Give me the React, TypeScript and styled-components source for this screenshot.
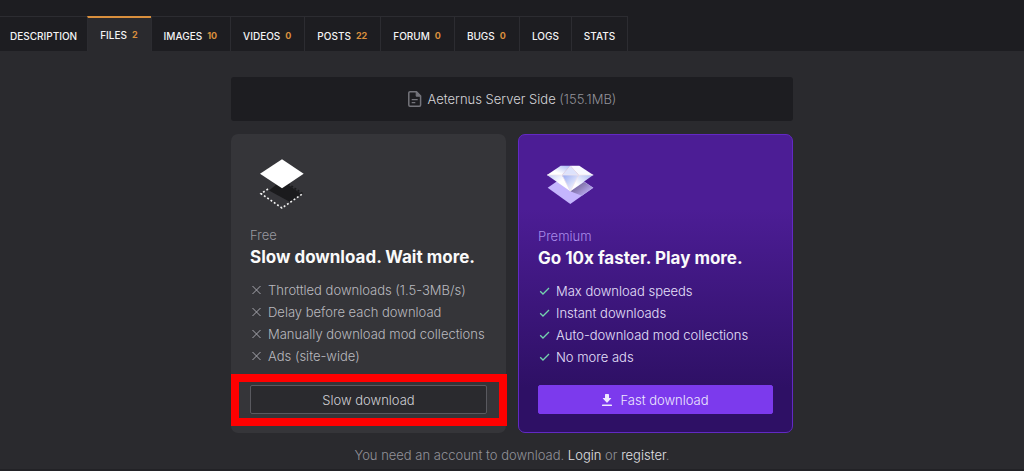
import React from "react";
import styled, { createGlobalStyle } from "styled-components";

const GlobalStyle = createGlobalStyle`
  *, *::before, *::after { box-sizing: border-box; }
  body {
    margin: 0;
    background: #222226;
    color: #d4d4d8;
    font-family: Inter, "Liberation Sans", sans-serif;
    font-size: 13px;
    font-weight: 300;
    line-height: 20px;
  }
`;

const Header = styled.header`
  padding-top: 16px;
  background: #1d1d21;
`;

const TabBar = styled.nav`
  display: flex;
  width: fit-content;
  height: 35px;
  border-right: 1px solid #2c2c31;
`;

const Tab = styled.a<{ $active?: boolean }>`
  display: flex;
  align-items: center;
  gap: 5px;
  padding: ${(p) => (p.$active ? "1px 12px 0" : "3px 12px 0")};
  border-top: ${(p) => (p.$active ? "2px solid #d98f3d" : "1px solid #2c2c31")};
  border-left: 1px solid #2c2c31;
  background: ${(p) => (p.$active ? "#2a2a2e" : "transparent")};
  color: #f4f4f5;
  font-size: 10px;
  font-weight: 500;
  text-decoration: none;
  text-transform: uppercase;

  &:first-child {
    padding-left: 10px;
    padding-right: 10px;
    border-left: 0;
  }
`;

const Count = styled.span`
  padding-right: 1px;
  color: #d98f3d;
  font-size: 9px;
  font-weight: 700;
`;

const Main = styled.main`
  padding: 26px 16px 4px;
  background: #2a2a2e;
`;

const Column = styled.div`
  display: flex;
  flex-direction: column;
  gap: 12px;
  max-width: 562px;
  margin: 0 auto;
`;

const FileBar = styled.div`
  display: flex;
  align-items: center;
  justify-content: center;
  gap: 6px;
  padding: 12px;
  margin-bottom: 1px;
  border-radius: 3px;
  background: #1d1d21;
`;

const FileSize = styled.span`
  color: #929299;
`;

const Plans = styled.div`
  display: grid;
  grid-template-columns: repeat(2, 1fr);
  gap: 12px;
`;

const Plan = styled.section<{ $premium?: boolean }>`
  display: flex;
  flex-direction: column;
  padding: ${(p) => (p.$premium ? "19px 19px 18px" : "19px")};
  border: ${(p) => (p.$premium ? "1px solid #6229c4" : "0")};
  border-radius: 7px;
  background: ${(p) =>
    p.$premium ? "linear-gradient(#4c1d95 25%, #2e1065 85%)" : "#353539"};
  color: ${(p) => (p.$premium ? "#e6e0fb" : "#b9b9bf")};
`;

const PlanArt = styled.svg`
  width: 64px;
  height: 64px;
  margin-bottom: 8px;
`;

const PlanName = styled.div<{ $premium?: boolean }>`
  color: ${(p) => (p.$premium ? "#a98bea" : "#98989f")};
`;

const PlanTitle = styled.h2`
  margin: 0 0 10px;
  color: #fafafa;
  font-size: 17px;
  font-weight: 700;
  line-height: 24px;
`;

const Features = styled.ul`
  margin: 0 0 17px;
  padding: 0;
  list-style: none;
`;

const Feature = styled.li`
  display: flex;
  align-items: center;
  gap: 6px;
  line-height: 22px;
`;

const Mark = styled.svg<{ $color: string }>`
  flex: none;
  width: 12px;
  height: 12px;
  fill: none;
  stroke: ${(p) => p.$color};
`;

const Action = styled.div`
  position: relative;
  margin-top: auto;
`;

const Highlight = styled.div`
  position: absolute;
  inset: -11px -20px -12px -19px;
  border: 8px solid #ff0000;
  pointer-events: none;
`;

const Button = styled.button<{ $premium?: boolean }>`
  display: flex;
  align-items: center;
  justify-content: center;
  gap: 8px;
  width: 100%;
  height: 29px;
  padding: 0;
  border: 1px solid ${(p) => (p.$premium ? "#7c3aed" : "#59595f")};
  border-radius: 2px;
  background: ${(p) => (p.$premium ? "#7c3aed" : "#2a2a2e")};
  color: ${(p) => (p.$premium ? "#ede9fe" : "#d0d0d5")};
  font: inherit;
`;

const Notice = styled.p`
  margin: 0;
  color: #929299;
  text-align: center;
`;

const NoticeLink = styled.a`
  color: #e0e0e4;
  text-decoration: none;
`;

const tabs: { label: string; count?: number; active?: boolean }[] = [
  { label: "Description" },
  { label: "Files", count: 2, active: true },
  { label: "Images", count: 10 },
  { label: "Videos", count: 0 },
  { label: "Posts", count: 22 },
  { label: "Forum", count: 0 },
  { label: "Bugs", count: 0 },
  { label: "Logs" },
  { label: "Stats" },
];

const freeFeatures = [
  "Throttled downloads (1.5-3MB/s)",
  "Delay before each download",
  "Manually download mod collections",
  "Ads (site-wide)",
];

const premiumFeatures = [
  "Max download speeds",
  "Instant downloads",
  "Auto-download mod collections",
  "No more ads",
];

const FileIcon = () => (
  <svg width="14" height="16" viewBox="0 0 14 16" fill="none" stroke="#74747b" aria-hidden="true">
    <path d="M8.5 .8H2A1.2 1.2 0 0 0 .8 2v12A1.2 1.2 0 0 0 2 15.200h9.400a1.200 1.200 0 0 0 1.200-1.200V5z" strokeWidth="1.500" strokeLinejoin="round" />
    <path d="M8.200 .8V5.200h4.400z" fill="#74747b" />
    <path d="M3.700 8.600h6M3.700 11.600h3.600" strokeWidth="1.200" />
  </svg>
);

const DownloadIcon = () => (
  <svg width="10" height="12" viewBox="0 0 10 12" fill="currentColor" aria-hidden="true">
    <path d="M3.700 0h2.600q.7 0 .7.7V4h1.800q.8 0 .3.600L5.400 8.500q-.4.400-.8 0L.9 4.600Q.4 4 1.200 4H3V.7Q3 0 3.700 0z" />
    <rect y="10.600" width="10" height="1.400" rx=".6" />
  </svg>
);

const FreeArt = () => (
  <PlanArt viewBox="0 0 64 64" aria-hidden="true">
    <path d="M32 26.500 52.700 40.700" fill="none" stroke="#1b1b1d" strokeWidth="1.600" strokeDasharray="2 1.800" />
    <path d="M19 37.500 27 31h10L51.500 41 40 49z" fill="#1b1b1d" />
    <path d="M18 36 11 40.700 32 55l20.700-14.300" fill="none" stroke="#f0f0f0" strokeWidth="1.600" strokeDasharray="1.900 2.100" />
    <path d="M32 6.300 53.700 20.800 32 35.300 10 20.800z" fill="#fff" />
  </PlanArt>
);

const PremiumArt = () => (
  <PlanArt viewBox="0 0 64 64" aria-hidden="true">
    <defs>
      <linearGradient id="slabShade" gradientUnits="userSpaceOnUse" x1="34" y1="32" x2="45" y2="46">
        <stop offset="0" stopColor="#6d6090" />
        <stop offset="1" stopColor="#c4b5fd" />
      </linearGradient>
      <linearGradient id="facetLeft" x1="0" y1="0" x2="1" y2="1">
        <stop offset="0" stopColor="#c3cdf8" />
        <stop offset=".5" stopColor="#fff" />
      </linearGradient>
      <linearGradient id="facetRight" x1="0" y1="1" x2="1" y2="0">
        <stop offset=".35" stopColor="#fff" />
        <stop offset="1" stopColor="#a9b8f4" />
      </linearGradient>
      <linearGradient id="facetMiddle" x1="0" y1="0" x2="1" y2="1">
        <stop offset=".1" stopColor="#a3b3f3" />
        <stop offset=".8" stopColor="#f4f5ff" />
      </linearGradient>
    </defs>
    <path d="M32.300 18 55.300 33.700 32.300 50 9.700 33.700z" fill="#c4b5fd" />
    <path d="M32.300 37.300 46 28 55.300 33.700 43.800 41.800z" fill="url(#slabShade)" />
    <path d="M22.700 11.700 9 21h15l8.300-9.300z" fill="url(#facetRight)" />
    <path d="M32.300 11.700 24 21h16.700z" fill="#dde2fc" />
    <path d="M32.300 11.700h9L55.300 21H40.700z" fill="#f7f8ff" />
    <path d="M9 21h15l8.300 16.300z" fill="url(#facetLeft)" />
    <path d="M24 21h16.700l-8.400 16.300z" fill="url(#facetMiddle)" />
    <path d="M40.700 21h14.600l-23 16.300z" fill="url(#facetRight)" />
    <path d="M9 21h46.300M32.300 12 24 21l8.300 16.300L40.700 21z" fill="none" stroke="#f3e6ea" strokeWidth=".7" />
  </PlanArt>
);

export default function App() {
  return (
    <>
      <GlobalStyle />
      <Header>
        <TabBar>
          {tabs.map((tab) => (
            <Tab key={tab.label} href="#" $active={tab.active}>
              {tab.label}
              {tab.count !== undefined && <Count>{tab.count}</Count>}
            </Tab>
          ))}
        </TabBar>
      </Header>
      <Main>
        <Column>
          <FileBar>
            <FileIcon />
            <span>
              Aeternus Server Side <FileSize>(155.1MB)</FileSize>
            </span>
          </FileBar>
          <Plans>
            <Plan>
              <FreeArt />
              <PlanName>Free</PlanName>
              <PlanTitle>Slow download. Wait more.</PlanTitle>
              <Features>
                {freeFeatures.map((text) => (
                  <Feature key={text}>
                    <Mark $color="#a6a6ad" viewBox="0 0 12 12" aria-hidden="true">
                      <path d="M2.500 2l8 8M10.500 2l-8 8" />
                    </Mark>
                    {text}
                  </Feature>
                ))}
              </Features>
              <Action>
                <Button type="button">Slow download</Button>
                <Highlight />
              </Action>
            </Plan>
            <Plan $premium>
              <PremiumArt />
              <PlanName $premium>Premium</PlanName>
              <PlanTitle>Go 10x faster. Play more.</PlanTitle>
              <Features>
                {premiumFeatures.map((text) => (
                  <Feature key={text}>
                    <Mark $color="#74d3ae" viewBox="0 0 12 12" aria-hidden="true">
                      <path d="M2.200 6.200l2.800 2.800 6-6" strokeWidth="1.300" />
                    </Mark>
                    {text}
                  </Feature>
                ))}
              </Features>
              <Action>
                <Button type="button" $premium>
                  <DownloadIcon />
                  Fast download
                </Button>
              </Action>
            </Plan>
          </Plans>
          <Notice>
            You need an account to download. <NoticeLink href="#">Login</NoticeLink> or{" "}
            <NoticeLink href="#">register</NoticeLink>.
          </Notice>
        </Column>
      </Main>
    </>
  );
}
